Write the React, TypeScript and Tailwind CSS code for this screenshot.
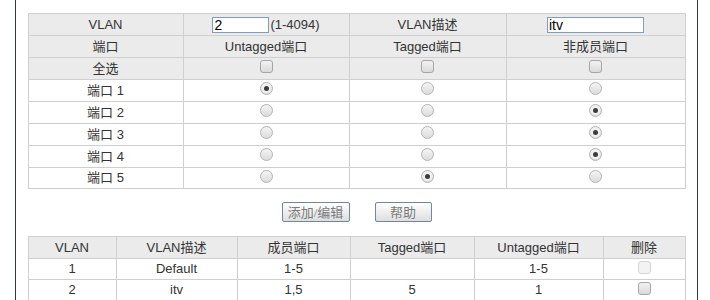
import React from "react";

const font = "font-['Arial','Liberation_Sans','Noto_Sans_CJK_SC',sans-serif]";

const Radio: React.FC<{ checked?: boolean }> = ({ checked }) => (
  <span className="mb-[4px] flex h-[13px] w-[13px] items-center justify-center rounded-full border border-[#b4b4b4] bg-gradient-to-b from-[#f4f4f4] to-[#dcdcdc]">
    {checked && (
      <span className="flex h-[9px] w-[9px] items-center justify-center rounded-full bg-[#f0f0f0]">
        <span className="h-[5px] w-[5px] rounded-full bg-[#3c3c3c]" />
      </span>
    )}
  </span>
);

const Check: React.FC<{ disabled?: boolean }> = ({ disabled }) => (
  <span
    className={
      disabled
        ? "mb-[4px] block h-[13px] w-[13px] rounded-[3px] border border-[#d4d4d4] bg-[#f3f3f3]"
        : "mb-[4px] block h-[13px] w-[13px] rounded-[3px] border border-[#a6a6a6] bg-gradient-to-b from-[#f2f2f2] to-[#dadada]"
    }
  />
);

const Center: React.FC<{ children: React.ReactNode }> = ({ children }) => (
  <div className="flex items-center justify-center">{children}</div>
);

const ports = [
  { name: "端口 1", sel: 0 },
  { name: "端口 2", sel: 2 },
  { name: "端口 3", sel: 2 },
  { name: "端口 4", sel: 2 },
  { name: "端口 5", sel: 1 },
];

const vlans = [
  { id: "1", desc: "Default", members: "1-5", tagged: "", untagged: "1-5", disabled: true },
  { id: "2", desc: "itv", members: "1,5", tagged: "5", untagged: "1", disabled: false },
];

export default function App() {
  const cell = "border border-[#cfcfcf] p-0 text-center align-middle";
  return (
    <div className={`${font} min-h-screen bg-white text-[13px] text-[#333]`}>
      <div className="ml-[15px] min-h-[300px] w-[683px] border-x border-[#2f3742] pt-[13px]">
        <table className="mx-auto w-[657px] table-fixed border-collapse">
          <colgroup>
            <col className="w-[155px]" />
            <col className="w-[166px]" />
            <col className="w-[157px]" />
            <col className="w-[179px]" />
          </colgroup>
          <tbody>
            <tr className="h-[22px] bg-[#ebebeb]">
              <td className={cell}>VLAN</td>
              <td className={cell}>
                <div className="flex items-center justify-center">
                  <input
                    readOnly
                    value="2"
                    className="h-[16px] w-[57px] border border-[#7f9db9] bg-white px-[1px] text-[14px] leading-none text-black outline-none"
                  />
                  <span className="ml-[1px]">(1-4094)</span>
                </div>
              </td>
              <td className={cell}>VLAN描述</td>
              <td className={cell}>
                <Center>
                  <input
                    readOnly
                    value="itv"
                    className="h-[16px] w-[97px] border border-[#7f9db9] bg-white px-[1px] text-[14px] leading-none text-black outline-none"
                  />
                </Center>
              </td>
            </tr>
            <tr className="h-[22px] bg-[#ebebeb]">
              <td className={cell}>端口</td>
              <td className={cell}>Untagged端口</td>
              <td className={cell}>Tagged端口</td>
              <td className={cell}>非成员端口</td>
            </tr>
            <tr className="h-[22px] bg-[#ebebeb]">
              <td className={cell}>全选</td>
              {[0, 1, 2].map((i) => (
                <td key={i} className={cell}>
                  <Center>
                    <Check />
                  </Center>
                </td>
              ))}
            </tr>
            {ports.map((p, idx) => (
              <tr key={p.name} className={idx > 3 ? "h-[21px] bg-white" : "h-[22px] bg-white"}>
                <td className={cell}>{p.name}</td>
                {[0, 1, 2].map((i) => (
                  <td key={i} className={cell}>
                    <Center>
                      <Radio checked={p.sel === i} />
                    </Center>
                  </td>
                ))}
              </tr>
            ))}
          </tbody>
        </table>

        <div className="mb-[14px] mt-[13px] flex justify-center gap-[25px] font-['Liberation_Serif','Noto_Sans_CJK_SC',serif] text-[13px] text-[#7a7a7a]">
          <button className="h-[20px] w-[68px] rounded-[2px] border border-[#6f86a3] bg-gradient-to-b from-white to-[#dedede]">
            添加/编辑
          </button>
          <button className="h-[20px] w-[57px] rounded-[2px] border border-[#6f86a3] bg-gradient-to-b from-white to-[#dedede]">
            帮助
          </button>
        </div>

        <table className="mx-auto w-[657px] table-fixed border-collapse">
          <colgroup>
            <col className="w-[88px]" />
            <col className="w-[121px]" />
            <col className="w-[113px]" />
            <col className="w-[124px]" />
            <col className="w-[129px]" />
            <col className="w-[82px]" />
          </colgroup>
          <tbody>
            <tr className="h-[22px] bg-[#ebebeb]">
              <td className={cell}>VLAN</td>
              <td className={cell}>VLAN描述</td>
              <td className={cell}>成员端口</td>
              <td className={cell}>Tagged端口</td>
              <td className={cell}>Untagged端口</td>
              <td className={cell}>删除</td>
            </tr>
            {vlans.map((v) => (
              <tr key={v.id} className="h-[21px] bg-white">
                <td className={cell}>{v.id}</td>
                <td className={cell}>{v.desc}</td>
                <td className={cell}>{v.members}</td>
                <td className={cell}>{v.tagged}</td>
                <td className={cell}>{v.untagged}</td>
                <td className={cell}>
                  <Center>
                    <Check disabled={v.disabled} />
                  </Center>
                </td>
              </tr>
            ))}
          </tbody>
        </table>
      </div>
    </div>
  );
}
